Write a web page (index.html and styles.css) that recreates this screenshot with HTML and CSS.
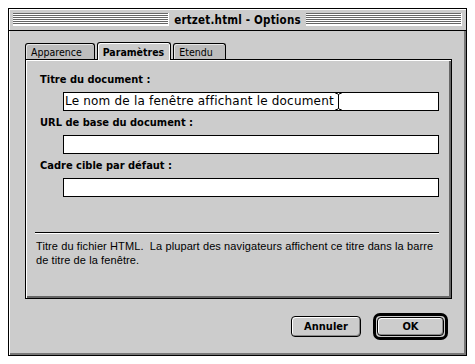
FILE: index.html
```html
<!DOCTYPE html>
<html lang="fr">
<head>
    <meta charset="UTF-8">
    <meta name="viewport" content="width=device-width, initial-scale=1.0">
    <title>ertzet.html - Options</title>
    <link rel="stylesheet" href="styles.css">
</head>
<body>
    <div class="window">
        <div class="titlebar">
            <span class="stripes"></span>
            <span class="title">ertzet.html - Options</span>
            <span class="stripes"></span>
        </div>

        <div class="content">
            <div class="tabs">
                <div class="tab">Apparence</div>
                <div class="tab tab-active">Paramètres</div>
                <div class="tab">Etendu</div>
            </div>

            <div class="panel">
                <div class="label">Titre du document :</div>
                <div class="field"><span class="value">Le nom de la fenêtre affichant le document</span><svg class="ibeam" width="7" height="17" viewBox="0 0 7 17">
                        <path d="M0.5 0.5h2l1 1.5 1-1.5h2M0.5 16.5h2l1-1.5 1 1.5h2M3.5 2v13" fill="none" stroke="#000" stroke-width="1"/>
                    </svg></div>

                <div class="label">URL de base du document :</div>
                <div class="field"></div>

                <div class="label">Cadre cible par défaut :</div>
                <div class="field"></div>

                <div class="separator"></div>
                <p class="help">Titre du fichier HTML.&nbsp; La plupart des navigateurs affichent ce titre dans la barre de titre de la fenêtre.</p>
            </div>

            <div class="buttons">
                <button class="btn">Annuler</button>
                <div class="btn-ring">
                    <button class="btn btn-default">OK</button>
                </div>
            </div>
        </div>
    </div>
</body>
</html>
```

FILE: styles.css
```css
body{
    margin: 0;
    background: #fff;
    font-family: "DejaVu Sans", sans-serif;
    font-size: 11px;
    color: #000;
}
.window{
    margin: 8px 0 0 8px;
    width: 459px;
    height: 348px;
    box-sizing: border-box;
    border: 1px solid #000;
    background: #cccccc;
    display: flex;
    flex-direction: column;
    box-shadow: inset 1px 1px 0 #fff, inset -2px -2px 0 #777;
}
.titlebar{
    height: 22px;
    box-sizing: border-box;
    border-bottom: 1px solid #000;
    display: flex;
    align-items: center;
    padding: 0 4px 0 4px;
    gap: 5px;
    background: #cccccc;
    box-shadow: inset 1px 1px 0 #fff;
}
.stripes{
    flex: 1;
    height: 12px;
    background: repeating-linear-gradient(#666 0 1px, #fff 1px 2px);
    border-right: 1px solid #fff;
    border-bottom: 1px solid #fff;
}
.title{
    font-family: "DejaVu Sans Condensed", sans-serif;
    font-weight: bold;
    font-size: 11.5px;
    letter-spacing: 0.2px;
}
.content{
    flex: 1;
    padding: 12px 0 0 16px;
    display: flex;
    flex-direction: column;
}
.tabs{
    display: flex;
    gap: 2px;
    height: 16px;
    position: relative;
    z-index: 1;
}
.tab{
    box-sizing: border-box;
    height: 16px;
    border: 1px solid #000;
    border-bottom: none;
    border-radius: 3px 3px 0 0;
    background: #bdbdbd;
    box-shadow: inset 1px 1px 0 #e6e6e6;
    padding: 1px 12px 0 5px;
    font-family: "DejaVu Sans Condensed", sans-serif;
    font-size: 10.5px;
    line-height: 14px;
}
.tab-active{
    height: 18px;
    margin-top: -1px;
    background: #cccccc;
    font-weight: bold;
    padding: 2px 6px 0 5px;
    box-shadow: inset 1px 1px 0 #fff, inset -1px 0 0 #fff;
}
.panel{
    width: 427px;
    height: 240px;
    box-sizing: border-box;
    border: 1px solid #000;
    box-shadow: inset 1px 1px 0 #fff, inset -2px -2px 0 #666;
    padding: 13px 12px 0 9px;
}
.label{
    margin-left: 5px;
    font-family: "DejaVu Sans Condensed", sans-serif;
    font-weight: bold;
    font-size: 11px;
    line-height: 14px;
    margin-bottom: 5px;
}
.field{
    margin-left: 28px;
    height: 19px;
    box-sizing: border-box;
    border: 1px solid #000;
    background: #fff;
    padding-left: 1px;
    line-height: 17px;
    font-size: 12px;
    letter-spacing: 0.2px;
    margin-bottom: 5px;
    display: flex;
}
.ibeam{
    display: block;
    margin-left: 1px;
}
.separator{
    margin-top: 35px;
    border-top: 1px solid #000;
    border-bottom: 1px solid #fff;
}
.help{
    margin: 5px 0 0 1px;
    font-family: "Liberation Sans", sans-serif;
    font-size: 11px;
    letter-spacing: 0.1px;
    line-height: 14px;
}
.buttons{
    display: flex;
    justify-content: flex-end;
    align-items: center;
    gap: 12px;
    margin-top: 14px;
    padding-right: 18px;
}
.btn{
    box-sizing: border-box;
    width: 70px;
    height: 21px;
    border: 1px solid #000;
    border-radius: 4px;
    background: #cccccc;
    box-shadow: inset 1px 1px 0 #fff, inset -1px -1px 0 #888;
    font-family: "DejaVu Sans Condensed", sans-serif;
    font-weight: bold;
    font-size: 11px;
    padding: 0;
}
.btn-ring{
    box-sizing: border-box;
    width: 75px;
    height: 27px;
    border: 3px solid #000;
    border-radius: 7px;
    padding: 1px;
    display: flex;
}
.btn-default{
    width: 100%;
    height: 100%;
}
```
